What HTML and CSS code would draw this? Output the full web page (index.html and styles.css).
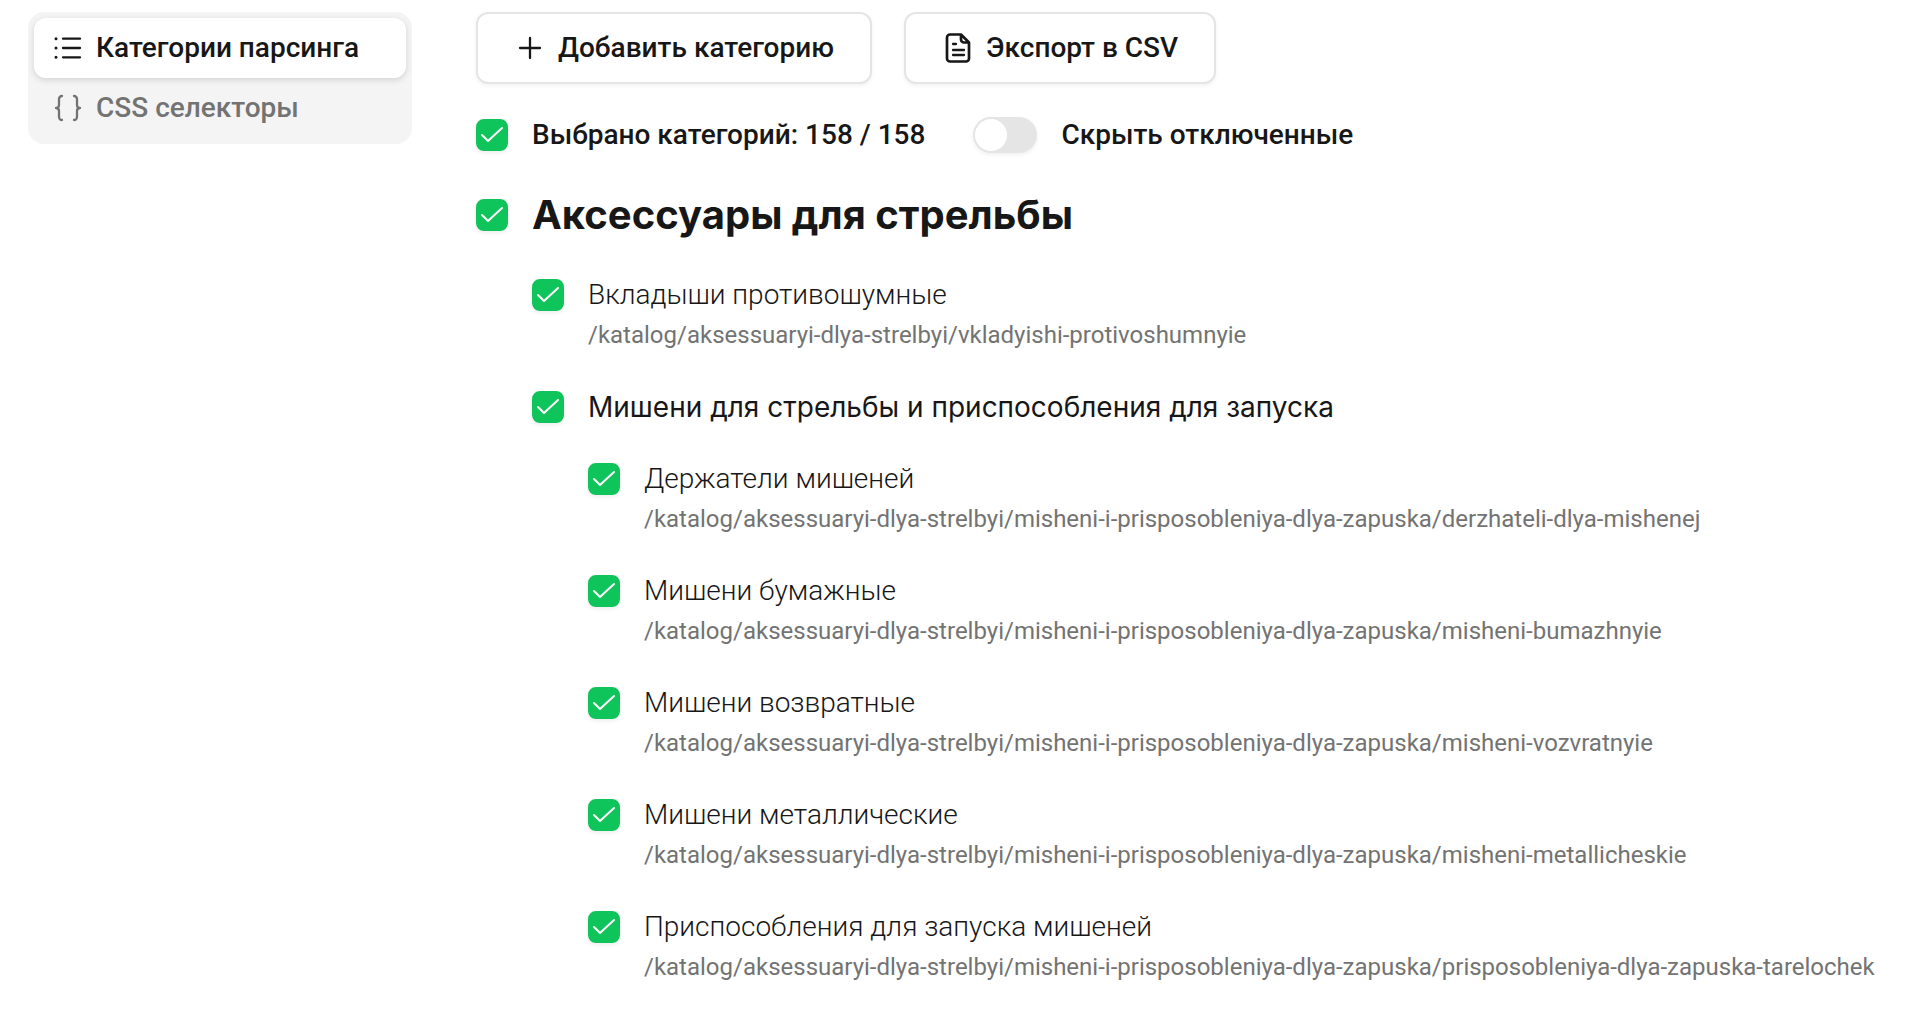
FILE: index.html
```html
<!DOCTYPE html>
<html lang="ru">
<head>
    <meta charset="UTF-8">
    <meta name="viewport" content="width=device-width, initial-scale=1.0">
    <title>Категории парсинга</title>
    <link rel="stylesheet" href="styles.css">
</head>
<body>
    <div class="layout">
        <nav class="tabs">
            <button type="button" class="tab tab-active">
                <svg class="icon" viewBox="0 0 28 28" fill="none" stroke="currentColor" stroke-width="2.3" stroke-linecap="round">
                    <path d="M9 4.7h17M9 14h17M9 23.3h17"/>
                    <path stroke-width="3" d="M2 4.7h.01M2 14h.01M2 23.3h.01"/>
                </svg>
                Категории парсинга
            </button>
            <button type="button" class="tab">
                <svg class="icon" viewBox="0 0 28 28" fill="none" stroke="currentColor" stroke-width="2.3" stroke-linecap="round" stroke-linejoin="round">
                    <path d="M8 2a3 3 0 0 0-3 3v6c0 2-1 3-3 3 2 0 3 1 3 3v6a3 3 0 0 0 3 3M20 2a3 3 0 0 1 3 3v6c0 2 1 3 3 3-2 0-3 1-3 3v6a3 3 0 0 1-3 3"/>
                </svg>
                CSS селекторы
            </button>
        </nav>

        <main class="content">
            <div class="actions">
                <button type="button" class="btn">
                    <svg class="icon" viewBox="0 0 32 32" fill="none" stroke="currentColor" stroke-width="2.3" stroke-linecap="round">
                        <path d="M16 6v20M6 16h20"/>
                    </svg>
                    Добавить категорию
                </button>
                <button type="button" class="btn">
                    <svg class="icon" viewBox="0 0 32 32" fill="none" stroke="currentColor" stroke-width="2.7" stroke-linecap="round" stroke-linejoin="round">
                        <path d="M19 2.5H8a3 3 0 0 0-3 3v21a3 3 0 0 0 3 3h16a3 3 0 0 0 3-3V10.500zM19 2.500v5a3 3 0 0 0 3 3h5"/>
                        <path stroke-width="2.3" d="M11 12h3M11 18h11M11 23h11"/>
                    </svg>
                    Экспорт в CSV
                </button>
            </div>

            <div class="filters">
                <label class="option"><input type="checkbox" class="check" checked>Выбрано категорий: 158 / 158</label>
                <label class="option"><input type="checkbox" class="switch" role="switch">Скрыть отключенные</label>
            </div>

            <ul class="tree">
                <li class="category">
                    <input type="checkbox" class="check" id="c1" checked>
                    <h2><label for="c1">Аксессуары для стрельбы</label></h2>
                </li>
                <li class="category level-1">
                    <input type="checkbox" class="check" id="c2" checked>
                    <div class="info">
                        <label class="name" for="c2">Вкладыши противошумные</label>
                        <span class="path">/katalog/aksessuaryi-dlya-strelbyi/vkladyishi-protivoshumnyie</span>
                    </div>
                </li>
                <li class="category level-1">
                    <input type="checkbox" class="check" id="c3" checked>
                    <div class="info">
                        <label class="name parent" for="c3">Мишени для стрельбы и приспособления для запуска</label>
                    </div>
                </li>
                <li class="category level-2">
                    <input type="checkbox" class="check" id="c4" checked>
                    <div class="info">
                        <label class="name" for="c4">Держатели мишеней</label>
                        <span class="path">/katalog/aksessuaryi-dlya-strelbyi/misheni-i-prisposobleniya-dlya-zapuska/derzhateli-dlya-mishenej</span>
                    </div>
                </li>
                <li class="category level-2">
                    <input type="checkbox" class="check" id="c5" checked>
                    <div class="info">
                        <label class="name" for="c5">Мишени бумажные</label>
                        <span class="path">/katalog/aksessuaryi-dlya-strelbyi/misheni-i-prisposobleniya-dlya-zapuska/misheni-bumazhnyie</span>
                    </div>
                </li>
                <li class="category level-2">
                    <input type="checkbox" class="check" id="c6" checked>
                    <div class="info">
                        <label class="name" for="c6">Мишени возвратные</label>
                        <span class="path">/katalog/aksessuaryi-dlya-strelbyi/misheni-i-prisposobleniya-dlya-zapuska/misheni-vozvratnyie</span>
                    </div>
                </li>
                <li class="category level-2">
                    <input type="checkbox" class="check" id="c7" checked>
                    <div class="info">
                        <label class="name" for="c7">Мишени металлические</label>
                        <span class="path">/katalog/aksessuaryi-dlya-strelbyi/misheni-i-prisposobleniya-dlya-zapuska/misheni-metallicheskie</span>
                    </div>
                </li>
                <li class="category level-2">
                    <input type="checkbox" class="check" id="c8" checked>
                    <div class="info">
                        <label class="name" for="c8">Приспособления для запуска мишеней</label>
                        <span class="path">/katalog/aksessuaryi-dlya-strelbyi/misheni-i-prisposobleniya-dlya-zapuska/prisposobleniya-dlya-zapuska-tarelochek</span>
                    </div>
                </li>
            </ul>
        </main>
    </div>
</body>
</html>
```

FILE: styles.css
```css
* {
    box-sizing: border-box;
}
body {
    margin: 0;
    background-color: #fff;
    color: #171717;
    font-family: Roboto, sans-serif;
    font-size: 28px;
    line-height: 40px;
}
button {
    font: inherit;
    font-weight: 500;
    color: inherit;
    cursor: pointer;
}
.layout {
    display: flex;
    align-items: flex-start;
    gap: 64px;
    padding: 12px 28px;
}
.icon {
    width: 28px;
    height: 28px;
    flex: none;
}

/* Sidebar */
.tabs {
    display: flex;
    flex-direction: column;
    flex: 0 0 384px;
    padding: 6px;
    border-radius: 16px;
    background-color: #f4f4f4;
}
.tab {
    display: flex;
    align-items: center;
    gap: 14px;
    padding: 10px 20px;
    border: 0;
    border-radius: 12px;
    background: none;
    color: #737373;
}
.tab-active {
    background-color: #fff;
    color: #171717;
    box-shadow: 0 2px 6px rgba(0, 0, 0, 0.14);
}

/* Toolbar */
.content {
    flex: 1;
    min-width: 0;
}
.actions {
    display: flex;
    gap: 32px;
}
.btn {
    display: flex;
    align-items: center;
    gap: 12px;
    height: 72px;
    padding: 0 36px;
    border: 2px solid #e5e5e5;
    border-radius: 12px;
    background-color: #fff;
    box-shadow: 0 2px 4px rgba(0, 0, 0, 0.05);
}
.btn .icon {
    width: 32px;
    height: 32px;
}
.filters {
    display: flex;
    gap: 48px;
    margin: 31px 0 32px;
    font-weight: 500;
}
.option {
    display: flex;
    align-items: center;
    gap: 24px;
}
.check,
.switch {
    appearance: none;
    flex: none;
    margin: 0;
    cursor: pointer;
}
.check {
    width: 32px;
    height: 32px;
    border: 2px solid #e5e5e5;
    border-radius: 8px;
    box-shadow: 0 2px 4px rgba(0, 0, 0, 0.08);
}
.check:checked {
    border-color: #0fc45a;
    background: #0fc45a url("data:image/svg+xml,%3Csvg xmlns='http://www.w3.org/2000/svg' viewBox='0 0 28 28' fill='none' stroke='white' stroke-width='2' stroke-linecap='round' stroke-linejoin='round'%3E%3Cpath d='M4 14l6 6L24 7'/%3E%3C/svg%3E") center / 28px no-repeat;
}
.switch {
    display: flex;
    align-items: center;
    width: 64px;
    height: 36px;
    padding: 2px;
    border-radius: 18px;
    background-color: #e5e5e5;
    box-shadow: 0 2px 4px rgba(0, 0, 0, 0.06);
}
.switch::before {
    content: "";
    width: 32px;
    height: 32px;
    border-radius: 50%;
    background-color: #fff;
}
.switch:checked {
    justify-content: flex-end;
    background-color: #0fc45a;
}

/* Category tree */
.tree {
    display: flex;
    flex-direction: column;
    gap: 32px;
    margin: 0;
    padding: 0;
    list-style: none;
}
.category {
    display: flex;
    gap: 24px;
}
.category .check {
    margin-top: 4px;
}
.category h2 {
    margin: 0;
    font-family: Inter, sans-serif;
    font-size: 40px;
    font-weight: 700;
    line-height: 56px;
}
.category:first-child {
    align-items: center;
}
.category:first-child .check {
    margin-top: 0;
}
.level-1 {
    padding-left: 56px;
}
.level-2 {
    padding-left: 112px;
}
.info {
    display: flex;
    flex-direction: column;
    min-width: 0;
}
.name {
    font-weight: 300;
}
.parent {
    font-family: Inter, sans-serif;
    font-weight: 400;
}
.path {
    color: #737373;
    font-size: 24px;
}
```
